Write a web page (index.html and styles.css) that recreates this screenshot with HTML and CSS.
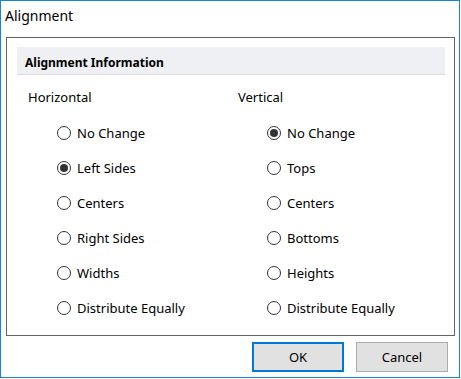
FILE: index.html
```html
<!DOCTYPE html>
<html lang="en">
<head>
    <meta charset="UTF-8">
    <title>Alignment</title>
    <link rel="stylesheet" href="styles.css">
</head>
<body>
    <div class="dialog">
        <div class="title">Alignment</div>

        <div class="group">
            <div class="group-header">Alignment Information</div>
            <div class="columns">
                <div class="column">
                    <div class="column-label">Horizontal</div>
                    <div class="radio-list">
                        <label class="radio"><span class="dot"></span>No Change</label>
                        <label class="radio"><span class="dot checked"></span>Left Sides</label>
                        <label class="radio"><span class="dot"></span>Centers</label>
                        <label class="radio"><span class="dot"></span>Right Sides</label>
                        <label class="radio"><span class="dot"></span>Widths</label>
                        <label class="radio"><span class="dot"></span>Distribute Equally</label>
                    </div>
                </div>
                <div class="column">
                    <div class="column-label">Vertical</div>
                    <div class="radio-list">
                        <label class="radio"><span class="dot checked"></span>No Change</label>
                        <label class="radio"><span class="dot"></span>Tops</label>
                        <label class="radio"><span class="dot"></span>Centers</label>
                        <label class="radio"><span class="dot"></span>Bottoms</label>
                        <label class="radio"><span class="dot"></span>Heights</label>
                        <label class="radio"><span class="dot"></span>Distribute Equally</label>
                    </div>
                </div>
            </div>
        </div>

        <div class="buttons">
            <button class="btn btn-default">OK</button>
            <button class="btn">Cancel</button>
        </div>
    </div>
</body>
</html>
```

FILE: styles.css
```css
body {
    margin: 0;
    background: #fff;
    font-family: "Noto Sans", "Open Sans", sans-serif;
    font-size: 13px;
    color: #000;
}
.dialog {
    width: 460px;
    height: 378px;
    box-sizing: border-box;
    border: 1px solid #1883d7;
    background: #fff;
}
.title {
    height: 30px;
    line-height: 30px;
    padding-left: 4px;
    font-size: 14px;
}
.group {
    margin: 6px 0 0 5px;
    width: 449px;
    height: 299px;
    box-sizing: border-box;
    border: 1px solid #646464;
    padding: 9px 9px 0 10px;
}
.group-header {
    height: 25px;
    padding-top: 2px;
    line-height: 28px;
    padding-left: 8px;
    background: #eff0f3;
    border-bottom: 1px solid #dcdde0;
    font-weight: bold;
    font-size: 12px;
}
.columns {
    display: grid;
    grid-template-columns: 210px 1fr;
    padding-left: 11px;
}
.column-label {
    margin-top: 12px;
    line-height: 20px;
}
.radio-list {
    margin-top: 8px;
    padding-left: 29px;
}
.radio {
    display: flex;
    align-items: center;
    height: 35px;
    gap: 6px;
}
.dot {
    width: 12px;
    height: 12px;
    border: 1px solid #333;
    border-radius: 50%;
    position: relative;
    flex: none;
}
.dot.checked::after {
    content: "";
    position: absolute;
    left: 2px;
    top: 2px;
    width: 8px;
    height: 8px;
    border-radius: 50%;
    background: #333;
}
.buttons {
    display: flex;
    justify-content: flex-end;
    gap: 12px;
    margin: 6px 11px 0 0;
}
.btn {
    width: 92px;
    height: 30px;
    box-sizing: border-box;
    border: 1px solid #adadad;
    background: #e1e1e1;
    font-family: inherit;
    font-size: 13px;
    color: #000;
    padding: 0;
}
.btn-default {
    border: 2px solid #0078d7;
}
```
